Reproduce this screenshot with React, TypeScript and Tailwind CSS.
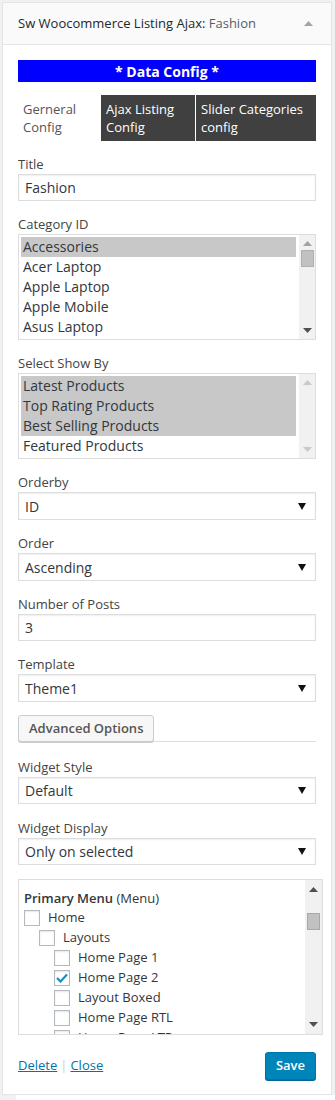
import React from 'react'

const font = "font-['Open_Sans',sans-serif]"

function Label({ children }: { children: React.ReactNode }) {
  return <div className="h-5 leading-5 text-[13px] text-[#444]">{children}</div>
}

function Arrow({ up, color }: { up?: boolean; color: string }) {
  return (
    <svg width="9" height="5" viewBox="0 0 9 5">
      <path d={up ? 'M0 5 L4.5 0 L9 5 Z' : 'M0 0 L9 0 L4.5 5 Z'} fill={color} />
    </svg>
  )
}

function Select({ value, short }: { value: string; short?: boolean }) {
  return (
    <div
      className={`${short ? 'h-[27px]' : 'h-[28px]'} border border-[#ddd] shadow-[inset_0_1px_2px_rgba(0,0,0,0.07)] bg-white flex items-center justify-between pl-[6px] pr-[9px]`}
    >
      <span className="text-[14px] text-[#32373c]">{value}</span>
      <svg width="8" height="7" viewBox="0 0 8 7">
        <path d="M0 0 L8 0 L4 7 Z" fill="#111" />
      </svg>
    </div>
  )
}

function Input({ value }: { value: string }) {
  return (
    <div className="h-[27px] border border-[#ddd] shadow-[inset_0_1px_2px_rgba(0,0,0,0.07)] bg-white flex items-center pl-[6px]">
      <span className="text-[14px] text-[#32373c]">{value}</span>
    </div>
  )
}

function ListBox({ items, selected, thumb }: { items: string[]; selected: number; thumb: boolean }) {
  return (
    <div className="border border-[#ddd] bg-white flex">
      <div className="flex-1 p-[2px] pr-[3px]">
        {items.map((it, i) => (
          <div
            key={it}
            className={`h-5 leading-5 pl-[2px] text-[14px] text-[#32373c] ${i < selected ? 'bg-[#c8c8c8]' : ''}`}
          >
            {it}
          </div>
        ))}
      </div>
      <div className="w-[16px] bg-[#f1f1f1] flex flex-col items-center justify-between py-[6px]">
        <div className="flex flex-col items-center gap-[4px]">
          <Arrow up color={thumb ? '#a3a3a3' : '#c9c9c9'} />
          {thumb && <div className="w-[13px] h-[17px] bg-[#c1c1c1] border border-[#b0b0b0]" />}
        </div>
        <Arrow color={thumb ? '#505050' : '#c9c9c9'} />
      </div>
    </div>
  )
}

function Check({ checked }: { checked?: boolean }) {
  return (
    <div className="w-4 h-4 border border-[#b4b9be] bg-white shadow-[inset_0_1px_2px_rgba(0,0,0,0.1)] flex items-center justify-center shrink-0">
      {checked && (
        <svg width="12" height="10" viewBox="0 0 12 10">
          <path d="M1 5 L4.5 8.5 L11 1.5" stroke="#1e8cbe" strokeWidth="2.2" fill="none" />
        </svg>
      )}
    </div>
  )
}

function MenuRow({ level, text, checked }: { level: number; text: string; checked?: boolean }) {
  const pad = ['pl-0', 'pl-[15px]', 'pl-[30px]'][level]
  return (
    <div className={`h-5 flex items-center gap-2 ${pad}`}>
      <Check checked={checked} />
      <span className="text-[13px] text-[#32373c]">{text}</span>
    </div>
  )
}

export default function App() {
  return (
    <div className={`${font} bg-[#f1f1f1] w-[335px] h-[1100px] pt-[2px] pl-[2px]`}>
      <div className="w-[330px] border border-[#e5e5e5] bg-white">
        <div className="h-[42px] bg-[#fafafa] border-b border-[#e5e5e5] flex items-center justify-between pl-[15px] pr-[18px]">
          <span className="text-[13px] text-[#23282d]">
            Sw Woocommerce Listing Ajax:<span className="text-[#555d66]"> Fashion</span>
          </span>
          <Arrow up color="#a0a5aa" />
        </div>

        <div className="px-[15px] pt-[15px] pb-[14px]">
          <div className="h-[22px] bg-[#0000ff] text-white text-[14px] font-bold flex items-center justify-center">
            * Data Config *
          </div>

          <div className="mt-[13px] flex h-[46px] text-[13px] leading-[18px]">
            <div className="w-[83px] px-[5px] py-[5px] text-[#555]">
              Gerneral<br />Config
            </div>
            <div className="w-[94px] px-[5px] py-[5px] bg-[#404040] text-white">
              Ajax Listing<br />Config
            </div>
            <div className="w-[120px] ml-px px-[5px] py-[5px] bg-[#404040] text-white">
              Slider Categories<br />config
            </div>
          </div>

          <div className="mt-[13px]">
            <Label>Title</Label>
            <Input value="Fashion" />
          </div>

          <div className="mt-[13px]">
            <Label>Category ID</Label>
            <ListBox
              items={['Accessories', 'Acer Laptop', 'Apple Laptop', 'Apple Mobile', 'Asus Laptop']}
              selected={1}
              thumb
            />
          </div>

          <div className="mt-[13px]">
            <Label>Select Show By</Label>
            <ListBox
              items={['Latest Products', 'Top Rating Products', 'Best Selling Products', 'Featured Products']}
              selected={3}
              thumb={false}
            />
          </div>

          <div className="mt-[13px]">
            <Label>Orderby</Label>
            <Select value="ID" />
          </div>

          <div className="mt-[13px]">
            <Label>Order</Label>
            <Select value="Ascending" />
          </div>

          <div className="mt-[13px]">
            <Label>Number of Posts</Label>
            <Input value="3" />
          </div>

          <div className="mt-[13px]">
            <Label>Template</Label>
            <Select value="Theme1" />
          </div>

          <div className="mt-[13px] flex items-end">
            <div className="h-[27px] px-[10px] border border-[#ccc] bg-[#f7f7f7] rounded-[3px] shadow-[0_1px_0_#ccc] flex items-center text-[13px] font-semibold text-[#555]">
              Advanced Options
            </div>
            <div className="flex-1 border-b border-[#ddd]" />
          </div>

          <div className="mt-[15px]">
            <Label>Widget Style</Label>
            <Select value="Default" short />
          </div>

          <div className="mt-[14px]">
            <Label>Widget Display</Label>
            <Select value="Only on selected" short />
          </div>

          <div className="mt-[14px] w-[305px] h-[156px] border border-[#ddd] bg-white flex overflow-hidden">
            <div className="flex-1 pl-[5px] pt-[8px]">
              <div className="h-5 leading-5 text-[13px] text-[#32373c]">
                <span className="font-semibold">Primary Menu</span> (Menu)
              </div>
              <MenuRow level={0} text="Home" />
              <MenuRow level={1} text="Layouts" />
              <MenuRow level={2} text="Home Page 1" />
              <MenuRow level={2} text="Home Page 2" checked />
              <MenuRow level={2} text="Layout Boxed" />
              <MenuRow level={2} text="Home Page RTL" />
              <MenuRow level={2} text="Home Page LTR" />
            </div>
            <div className="w-[17px] bg-[#f1f1f1] flex flex-col items-center justify-between py-[7px]">
              <div className="flex flex-col items-center gap-[21px]">
                <Arrow up color="#505050" />
                <div className="w-[13px] h-[17px] bg-[#c1c1c1] border border-[#a8a8a8]" />
              </div>
              <Arrow color="#505050" />
            </div>
          </div>

          <div className="mt-[17px] flex items-center justify-between">
            <div className="text-[13px] text-[#0073aa]">
              <span className="underline">Delete</span>
              <span className="text-[#ccc] mx-[3px]">|</span>
              <span className="underline">Close</span>
            </div>
            <div className="h-[28px] px-[10px] rounded-[3px] bg-[#0085ba] border border-[#0073aa] shadow-[0_1px_0_#006799] flex items-center text-white text-[13px] font-semibold">
              Save
            </div>
          </div>
        </div>
      </div>
      <div className="ml-[14px] h-[5px] bg-white" />
    </div>
  )
}
